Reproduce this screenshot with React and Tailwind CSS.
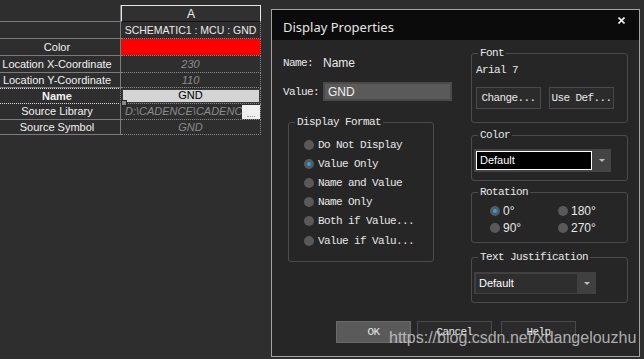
import React from "react";

const mono = "font-['Liberation_Mono',monospace] text-[11px] tracking-[-0.6px] leading-[12px] text-[#e8e8e8]";

const Radio = ({ on }) => (
    <span className="flex h-[10px] w-[10px] shrink-0 items-center justify-center rounded-full bg-[#595959]">
        {on && <span className="h-[4px] w-[4px] rounded-full bg-[#1ea0ff]" />}
    </span>
);

const Group = ({ title, className, inner, children }) => (
    <fieldset className={`rounded-[3px] border border-[#4b4b4b] ${className}`}>
        <legend className={`ml-[6px] px-[2px] ${mono}`}>{title}</legend>
        <div className={inner}>{children}</div>
    </fieldset>
);

const Combo = () => (
    <div className="flex h-[23px] w-[137px] items-center bg-[#444444] pl-[2px]">
        <div className="flex h-[19px] w-[116px] items-center border border-white bg-black pl-[3px] font-['Liberation_Sans',sans-serif] text-[11px] text-white">Default</div>
        <div className="flex flex-1 items-center justify-center">
            <svg width="6" height="3" viewBox="0 0 6 3"><path d="M0 0h6L3 3z" fill="#bdbdbd" /></svg>
        </div>
    </div>
);

const Btn = ({ label, primary, className }) => (
    <div className={`flex h-[22px] items-center justify-center border ${primary ? "border-[#6a6a6a] bg-[#5a5a5a]" : "border-[#4a4a4a] bg-[#2b2b2b]"} ${mono} ${className}`}>
        {label}
    </div>
);

const sheetRows = [
    { label: "", value: "SCHEMATIC1 : MCU : GND", h: "h-[17px]", kind: "plain" },
    { label: "Color", h: "h-[17px]", kind: "red" },
    { label: "Location X-Coordinate", value: "230", h: "h-[17px]", kind: "italic" },
    { label: "Location Y-Coordinate", value: "110", h: "h-[15px]", kind: "italic" },
    { label: "Name", value: "GND", h: "h-[16px]", kind: "name" },
    { label: "Source Library", value: "D:\\CADENCE\\CADENC", h: "h-[16px]", kind: "lib" },
    { label: "Source Symbol", value: "GND", h: "h-[15px]", kind: "italic" },
];

const Sheet = () => (
    <div className="w-[261px] pt-[5px] font-['Liberation_Sans',sans-serif] text-[11px]">
        <div className="flex h-[17px]">
            <div className="w-[121px] border-r border-b border-[#7b7b7b]" />
            <div className="flex w-[140px] items-center justify-center border border-[#e6e6e6] border-b-[#111] bg-[#303030] text-[12px] text-[#f0f0f0]">A</div>
        </div>
        {sheetRows.map(row => (
            <div key={row.label} className={`flex ${row.h}`}>
                <div className={`flex w-[121px] items-center justify-center border-r border-[#7b7b7b] pr-[6px] leading-none text-[#f2f2f2] ${row.kind === "name" ? "border-y border-dotted border-y-[#dcdcdc] font-bold" : "border-b"}`}>
                    {row.label}
                </div>
                <div className="relative flex w-[140px] items-center justify-center border-r border-b border-dotted border-[#8a8a8a] leading-none">
                    {row.kind === "plain" && <span className="text-[10.5px] text-[#ececec]">{row.value}</span>}
                    {row.kind === "red" && <div className="h-full w-full bg-[#ff0000]" />}
                    {row.kind === "italic" && <span className="italic text-[#8c8c8c]">{row.value}</span>}
                    {row.kind === "name" && (
                        <>
                            <div className="flex h-[14px] w-[138px] items-center justify-center border border-[#3a3a3a] bg-[#d4d4d4] text-black">{row.value}</div>
                            <span className="absolute left-0 top-[12px] h-[6px] w-[6px] border border-[#222] bg-[#8a8a8a]" />
                        </>
                    )}
                    {row.kind === "lib" && (
                        <div className="flex w-full items-center pl-[4px]">
                            <span className="flex-1 italic text-[#8c8c8c]">{row.value}</span>
                            <span className="flex h-[14px] w-[18px] items-end justify-center bg-[#efefef] pb-[2px]">
                                <span className="h-[1px] w-[8px] border-t border-dotted border-[#9a9a9a]" />
                            </span>
                        </div>
                    )}
                </div>
            </div>
        ))}
    </div>
);

const formats = ["Do Not Display", "Value Only", "Name and Value", "Name Only", "Both if Value...", "Value if Valu..."];

export default function App() {
    return (
        <div className="relative flex h-[359px] w-[644px] overflow-hidden bg-[#2e2e2e]">
            <Sheet />
            <div className="ml-[10px] mt-[9px] flex h-[348px] w-[369px] flex-col border border-[#a3a3a3] bg-[#262626]">
                <div className="flex h-[30px] shrink-0 items-center justify-between bg-[#0b0b0b] pl-[11px] pr-[14px]">
                    <span className="pt-[5px] font-['Noto_Sans',sans-serif] text-[13px] text-[#e6e6e6]">Display Properties</span>
                    <svg width="7" height="7" viewBox="0 0 7 7" className="mb-[10px]">
                        <path d="M0.5 0.5L6.5 6.5M6.5 0.5L0.5 6.5" stroke="#f0f0f0" strokeWidth="1.6" />
                    </svg>
                </div>
                <div className="flex">
                    <div className="w-[199px] pl-[11px]">
                        <div className="mt-[17px] flex h-[12px] items-center">
                            <span className={`w-[40px] ${mono}`}>Name:</span>
                            <span className="font-['Liberation_Sans',sans-serif] text-[12px] text-[#e8e8e8]">Name</span>
                        </div>
                        <div className="mt-[13px] flex h-[19px] items-center">
                            <span className={`w-[40px] ${mono}`}>Value:</span>
                            <div className="flex h-[19px] w-[129px] items-center border-2 border-[#4a4a4a] bg-[#5a5a5a] pl-[3px] font-['Liberation_Sans',sans-serif] text-[12px] text-[#f0f0f0]">GND</div>
                        </div>
                        <Group title="Display Format" className="ml-[5px] mt-[15px] h-[146px] w-[146px]" inner="pl-[15px] pt-[7px]">
                            {formats.map((f, i) => (
                                <div key={f} className="flex h-[19.2px] items-center gap-[4px]">
                                    <Radio on={i === 1} />
                                    <span className={mono}>{f}</span>
                                </div>
                            ))}
                        </Group>
                    </div>
                    <div className="w-[157px]">
                        <Group title="Font" className="mt-[7px] h-[76px]" inner="pl-[4px]">
                            <div className={`mt-[5px] ${mono}`}>Arial 7</div>
                            <div className="mt-[11px] flex gap-[8px]">
                                <Btn label="Change..." className="w-[65px]" />
                                <Btn label="Use Def..." className="w-[65px]" />
                            </div>
                        </Group>
                        <Group title="Color" className="mt-[6px] h-[52px]" inner="pl-[2px] pt-[8px]">
                            <Combo />
                        </Group>
                        <Group title="Rotation" className="mt-[5px] h-[57px]" inner="pl-[18px] pt-[4px]">
                            <div className="grid grid-cols-[68px_1fr]">
                                {[["0°", true], ["180°", false], ["90°", false], ["270°", false]].map(([l, on]) => (
                                    <div key={l} className="flex h-[17px] items-center gap-[3px]">
                                        <Radio on={on} />
                                        <span className="font-['Liberation_Sans',sans-serif] text-[12px] text-[#e8e8e8]">{l}</span>
                                    </div>
                                ))}
                            </div>
                        </Group>
                        <Group title="Text Justification" className="mt-[8px] h-[52px]" inner="pl-[2px] pt-[9px]">
                            <div className="flex h-[22px] w-[122px] items-center bg-[#404040] pl-[2px]">
                                <div className="flex h-[19px] w-[101px] items-center bg-[#2e2e2e] pl-[3px] font-['Liberation_Sans',sans-serif] text-[11px] text-white">Default</div>
                                <div className="flex flex-1 items-center justify-center">
                                    <svg width="6" height="3" viewBox="0 0 6 3"><path d="M0 0h6L3 3z" fill="#bdbdbd" /></svg>
                                </div>
                            </div>
                        </Group>
                    </div>
                </div>
                <div className="mt-[18px] flex pl-[64px]">
                    <Btn label="OK" primary className="w-[75px]" />
                    <Btn label="Cancel" className="ml-[6px] w-[75px]" />
                    <Btn label="Help" className="ml-[9px] w-[75px]" />
                </div>
            </div>
            <span className="pointer-events-none absolute left-[389px] top-[330px] font-['Liberation_Sans',sans-serif] text-[16px] leading-[16px] text-[#d2d2d2]/80">https://blog.csdn.net/xdangelouzhu</span>
        </div>
    );
}
